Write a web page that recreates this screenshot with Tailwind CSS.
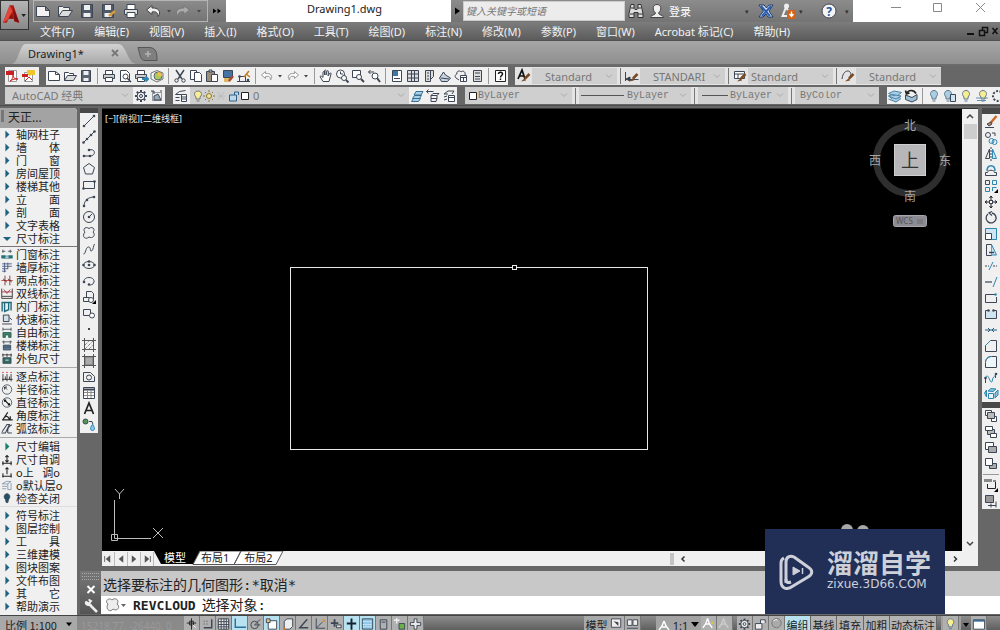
<!DOCTYPE html>
<html lang="zh-CN">
<head>
<meta charset="utf-8">
<title>Drawing1.dwg</title>
<script src="https://cdn.jsdelivr.net/npm/@tailwindcss/browser@4"></script>
</head>
<body class="flex h-screen flex-col overflow-hidden bg-[#676767] font-['Noto_Sans','Noto_Sans_CJK_SC',sans-serif] text-[11px] leading-none text-[#222]">

<!-- Title bar -->
<header class="relative flex h-[22px] shrink-0 items-stretch bg-linear-to-b from-[#8c8c8c] to-[#747474]">
  <button aria-label="应用程序菜单" class="absolute top-0 left-0 z-10 flex h-[30px] w-[29px] items-center border border-[#333] bg-linear-to-b from-[#b5b5b5] to-[#8a8a8a]">
    <svg class="h-[26px] w-[28px]" viewBox="0 0 28 26"><path d="M2 21 9 3h4l6 18-5-1-1-3H8l-2 4z" fill="#b3201b"/><path d="M9 3 2 21l5-3 5-9z" fill="#e2473a"/><path d="m12 4 7 17-5-2z" fill="#7c0f0e"/><path d="m8 17 3-6 2 6z" fill="#8a1512"/><path d="M21 12h5l-2.500 3z" fill="#222"/></svg>
  </button>
  <div class="ml-[33px] flex w-[175px] items-center border border-[#b4b4b4] pl-px" data-tools="bnew,bopen,bsave,bsaveas,bprint,bundo,bdd,bredo,bdd" data-kind="quick"></div>
  <button aria-label="更多" class="flex w-[18px] items-center justify-center"><svg class="size-3" viewBox="0 0 12 12"><path d="M2 3.500 5.500 6 2 8.500zM6.500 3.500 10 6 6.500 8.500z"/></svg></button>
  <h1 class="flex min-w-0 flex-1 items-center justify-center bg-white pb-[6px] pl-3 text-[11px] text-[#222]">Drawing1.dwg</h1>
  <button aria-label="展开搜索" class="flex w-3 items-center justify-center"><svg class="size-3" viewBox="0 0 12 12"><path d="M4 2.500 9 6 4 9.500z"/></svg></button>
  <input aria-label="搜索" placeholder="键入关键字或短语" class="my-px w-[162px] border border-[#ccc] bg-[#ececec] px-0.5 text-[10px] italic placeholder:text-[#777]">
  <div class="flex w-[228px] items-center pl-[2px] text-white">
    <button aria-label="搜索" class="mr-[3px] size-[18px]"><svg viewBox="0 0 18 18" fill="#ddd" stroke="#333"><path d="M4 2.500h3v4l1 1h2l1-1v-4h3l2 9v4h-5v-5H7v5H2v-4z"/><path d="M4 6h3m4 0h3M3 12h4m4 0h5"/></svg></button>
    <button class="flex items-center gap-[3px]"><svg class="size-[18px]" viewBox="0 0 18 18" fill="#eee" stroke="#444"><path d="M2.500 15.500c0-3 5-2 5-4.500C4 8 4.500 2.500 9 2.500S14 8 10.500 11c0 2.500 5 1.500 5 4.500z"/></svg>登录</button>
    <span class="flex-1"></span>
    <span class="text-[7px] text-[#333]">▾</span>
    <button aria-label="Exchange" class="ml-2 size-[18px]"><svg viewBox="0 0 18 18"><path d="M2 3h5l2.500 3L12 3h4l-4 6 4 6h-5l-2-3-3 3H2l4.500-6z" fill="#dce6f5" stroke="#1d3a6b"/><path d="m4 4 9 10M14 4 5 14" stroke="#2b5db0" stroke-width="2"/></svg></button>
    <button aria-label="连接" class="ml-1 size-[18px]"><svg viewBox="0 0 18 18"><path d="M7 5 3.500 14H12z" stroke="#eee" stroke-width="2" fill="none"/><circle cx="7.500" cy="4" r="2.500" fill="#eee"/><rect x="8" y="8" width="9" height="9" rx="1" fill="#d1651b"/><path d="M12.500 9.500v4.500m-2-2 2 2.500 2-2.500" stroke="#fff" stroke-width="1.400" fill="none"/></svg></button>
    <span class="ml-0.5 text-[7px] text-[#333]">▾</span>
    <button aria-label="帮助" class="ml-[18px] size-[16px]"><svg viewBox="0 0 16 16"><circle cx="8" cy="8" r="7" fill="#f4f4f4" stroke="#445"/><text x="8" y="12.500" text-anchor="middle" font-size="12" font-weight="700" fill="#2456a0">?</text></svg></button>
    <span class="mr-1 ml-2 text-[7px] text-[#333]">▾</span>
  </div>
  <div class="flex w-[147px] items-start justify-end gap-[26px] bg-white pr-3">
    <button aria-label="最小化" class="h-[15px] w-4"><svg viewBox="0 0 16 15" stroke="#888" fill="none"><path d="M3 7.500h10"/></svg></button>
    <button aria-label="最大化" class="h-[15px] w-4"><svg viewBox="0 0 16 15" stroke="#888" fill="none"><path d="M3.500 3.500h8v8h-8z"/></svg></button>
    <button aria-label="关闭" class="h-[15px] w-4"><svg viewBox="0 0 16 15" stroke="#888" fill="none"><path d="m4 3 9 9m0-9-9 9"/></svg></button>
  </div>
</header>

<!-- Menu bar -->
<nav class="flex h-[19px] shrink-0 items-center gap-5 border-b border-[#505050] bg-linear-to-b from-[#7d7d7d] to-[#5c5c5c] pl-10 whitespace-nowrap text-[#f2f2f2]">
  <button>文件(F)</button><button>编辑(E)</button><button>视图(V)</button><button>插入(I)</button><button>格式(O)</button><button>工具(T)</button><button>绘图(D)</button><button>标注(N)</button><button>修改(M)</button><button>参数(P)</button><button>窗口(W)</button><button>Acrobat 标记(C)</button><button>帮助(H)</button>
  <span class="flex-1"></span>
  <button aria-label="文档窗口" class="h-3 w-[34px]"><svg viewBox="0 0 34 12" stroke="#111" fill="none"><path d="M1 9h7" stroke-width="2"/><path d="M13.500 5.500h5v5h-5zM16.500 5V2.500h5v5H19M26.500 3l5 6m0-6-5 6" stroke-width="1.500"/></svg></button>
</nav>

<!-- File tabs -->
<div class="flex h-[25px] shrink-0 items-end border-b-2 border-[#6b6b6b] bg-linear-to-b from-[#a6a6a6] to-[#8f8f8f] pl-[11px]">
  <div class="relative h-[20px] w-[126px]">
    <svg class="absolute inset-0 h-full w-full" viewBox="0 0 126 20"><defs><linearGradient id="tg" x2="0" y2="1"><stop stop-color="#d2d2d2"/><stop offset="1" stop-color="#a9a9a9"/></linearGradient></defs><path d="M0 20c8 0 8-20 15-20h92c9 0 9 20 19 20z" fill="url(#tg)"/></svg>
    <div class="relative flex h-[18px] items-center justify-between pr-[18px] pl-[17px] text-[11px]"><button>Drawing1*</button><button aria-label="关闭标签" class="size-2"><svg viewBox="0 0 8 8" stroke="#777" stroke-width="1.800"><path d="m1 1 6 6m0-6L1 7"/></svg></button></div>
  </div>
  <button aria-label="新建标签" class="mb-[3px] h-[14px] w-[22px]"><svg viewBox="0 0 22 14" fill="#7f7f7f" stroke="#555"><path d="M1 .5h11c8 0 8 7 8 13H8C3 13.500 3 7 1 .5z"/><path d="M11 4v6M8 7h6" stroke="#b5b5b5" stroke-width="1.500"/></svg></button>
</div>

<!-- Standard toolbar and styles -->
<div class="flex h-[20px] shrink-0 items-stretch py-px">
  <div class="ml-[5px] flex w-[34px] items-center bg-[#f0f0f0]" data-tools="pdf,pdfc"></div>
  <div class="ml-[7px] flex shrink-0 items-center bg-[#f0f0f0]" data-tools="new,open,save,|,print,preview,plot,world,|,cut,copy,paste,match,block,|,undo,dd,redo,dd,|,pan,zoom,zoomw,zoomp,|,props,dcenter,palette,sheet,markup,calc,|,help"></div>
  <div class="ml-[7px] flex items-center bg-[#e4e4e4] pl-px">
    <span data-tools="tstyle" class="flex"></span>
    <span class="relative h-4 w-[85px]" data-select="Standard" data-pad="pl-[13px]"></span><i class="mx-[3px] h-4 w-px bg-[#777]"></i>
    <span data-tools="dstyle" class="flex"></span>
    <span class="relative h-4 w-[85px]" data-select="STANDARI" data-pad="pl-[13px]"></span><i class="mx-[3px] h-4 w-px bg-[#777]"></i>
    <span data-tools="tabstyle" class="flex"></span>
    <span class="relative h-4 w-[85px]" data-select="Standard" data-pad="pl-[3px]"></span><i class="mx-[3px] h-4 w-px bg-[#777]"></i>
    <span data-tools="mlstyle" class="flex"></span>
    <span class="relative h-4 w-[85px]" data-select="Standard" data-pad="pl-[13px]"></span>
  </div>
</div>

<!-- Workspace, layers and properties -->
<div class="flex h-[20px] shrink-0 items-stretch border-b border-[#4c4c4c] py-px">
  <div class="ml-[5px] flex w-[160px] items-center bg-[#f0f0f0]"><span class="relative h-full flex-1" data-select="AutoCAD 经典" data-pad="pl-[7px]"></span><span data-tools="gear,wsset" class="flex"></span></div>
  <div class="ml-[8px] flex w-[284px] items-center bg-[#f0f0f0]">
    <span data-tools="layers" class="flex"></span>
    <div class="ml-px flex h-full flex-1 items-center bg-[#cfcfcf]">
      <svg class="h-4 w-[62px]" viewBox="0 0 62 16" fill="none" stroke="#444"><path d="M6 9c-3-3-1-6 2-6s5 3 2 6v2H6zM6.500 13h3" fill="#f6ee9a" stroke="#777"/><circle cx="19" cy="8" r="2.500" fill="#f2e49a" stroke="#8a7a30"/><path d="M19 2v2m0 8v2m-6-6h2m8 0h2M15 4l1 1m6 6 1 1m0-8-1 1m-6 6-1 1" stroke="#8a7a30"/><path d="m28 4 6 8m0-8-6 8m-1-4h8" stroke="#bcbcbc"/><path d="M39.500 7h7v6h-7zM44.500 7V4h4v3" stroke="#2d5f86" fill="#bcd8ea"/><path d="M51.500 4.500h7v7h-7z" fill="#fff" stroke="#222"/></svg>
      <span class="relative h-full flex-1" data-select="0" data-pad="pl-[1px]"></span>
    </div>
    <span data-tools="lcur,lprev,lstate" class="flex"></span>
  </div>
  <div class="ml-[8px] flex w-[414px] items-center bg-[#e4e4e4] text-[10px] text-[#666]">
    <div class="flex h-full w-[107px] items-center bg-[#cfcfcf] pl-[3px]"><svg class="size-2.5" viewBox="0 0 10 10"><path d="M1.500 1.500h7v7h-7z" fill="#fff" stroke="#222"/></svg><span class="relative h-full flex-1" data-select="ByLayer" data-mono="1"></span></div>
    <i class="mx-[3px] h-4 w-px bg-[#777]"></i>
    <div class="flex h-full w-[112px] items-center bg-[#cfcfcf] pl-[2px]"><i class="mr-[3px] h-px w-[43px] bg-[#555]"></i><span class="relative h-full flex-1" data-select="ByLayer" data-mono="1"></span></div>
    <i class="mx-[3px] h-4 w-px bg-[#777]"></i>
    <div class="flex h-full w-[90px] items-center bg-[#cfcfcf] pl-[4px]"><i class="mr-[2px] h-px w-[26px] bg-[#555]"></i><span class="relative h-full flex-1" data-select="ByLayer" data-mono="1"></span></div>
    <i class="mx-[3px] h-4 w-px bg-[#777]"></i>
    <div class="flex h-full flex-1 items-center bg-[#cfcfcf] pl-[5px]"><span class="relative h-full flex-1" data-select="ByColor" data-mono="1"></span></div>
  </div>
  <div class="ml-[8px] flex flex-1 items-center overflow-hidden bg-[#f0f0f0]" data-tools="lay1,lay2,|,bulb,bulb2,bulby,bulbl,gearl"></div>
</div>

<!-- Workspace -->
<main class="flex min-h-0 flex-1 pt-[2px]">
  <aside class="w-[77px] shrink-0 overflow-hidden rounded-tr-sm bg-[#f0f0f0]">
    <h2 class="flex h-[20px] items-center gap-1 rounded-tr-sm bg-[#a3a3a3] pl-px text-[12px]"><i class="mb-1 h-3 w-[3px] bg-[#777]"></i>天正...</h2>
    <div id="palette"></div>
  </aside>
  <div class="ml-[3px] flex min-w-0 flex-1 flex-col">
    <div class="flex min-h-0 flex-1">
      <div class="w-[18px] shrink-0">
        <div class="h-[5px] bg-[#484848]"></div>
        <div class="flex flex-col items-center bg-[#f0f0f0]" data-tools="line,xline,pline,polygon,rect,arc,circle,cloud,spline,ellipse,earc,insert,mkblock,point,hatch,grad,region,table,mtext,addsel"></div>
      </div>
      <div class="ml-[4px] flex min-w-0 flex-1 flex-col border-t border-[#333]">
        <div class="flex min-h-0 flex-1">
          <section aria-label="绘图区" class="relative min-w-0 flex-1 overflow-hidden bg-black">
            <p class="pt-[5px] pl-[3px] text-[9px] text-[#e6e6e6]">[−][俯视][二维线框]</p>
            <svg class="absolute inset-0 h-full w-full" fill="none" stroke="#e8e8e8"><rect x="188.500" y="158.500" width="357" height="182"/><rect x="410.500" y="156.500" width="4" height="4" fill="#000"/></svg>
            <svg class="absolute bottom-1 left-2 h-[58px] w-[56px]" viewBox="0 0 56 58" fill="none" stroke="#bdbdbd"><path d="M4.500 11v38.500H41M1.500 45.500h6v6h-6zM5 0l4.500 5L14 0M9.500 5v5M43 39l10 10m0-10L43 49"/></svg>
            <svg class="absolute top-[8px] right-[9px] h-[112px] w-[88px]" viewBox="0 0 88 112"><circle cx="45" cy="43" r="33.500" fill="none" stroke="#2e2e2e" stroke-width="7"/><rect x="29.500" y="27.500" width="31" height="31" fill="#b7b7b9" stroke="#cfcfcf"/><text x="45" y="50" font-size="18" text-anchor="middle" fill="#333">上</text><g font-size="12" text-anchor="middle" fill="#a5a5a5"><text x="45" y="13">北</text><text x="45" y="84">南</text><text x="10" y="48">西</text><text x="80" y="48">东</text></g><rect x="28.500" y="98.500" width="33" height="11" rx="2" fill="#8b8b91" stroke="#a6a6ac"/><text x="31" y="107" font-size="8" fill="#55555c">WCS</text><path d="M52 102h6v5h-6z" fill="#7b7b82"/></svg>
            <svg class="absolute right-[92px] bottom-[16px] h-[12px] w-[30px]" viewBox="0 0 30 12" fill="#a8a8a8"><circle cx="7" cy="7" r="6"/><circle cx="23" cy="8" r="6"/></svg>
          </section>
          <div class="flex w-[16px] flex-col items-center bg-[#f0f0f0]">
            <button aria-label="向上滚动" class="h-[15px] w-3"><svg viewBox="0 0 12 15" fill="none" stroke="#444" stroke-width="1.500"><path d="m3 9 3-3 3 3"/></svg></button>
            <div class="h-[15px] w-[13px] bg-[#cdcdcd]"></div>
            <span class="flex-1"></span>
            <button aria-label="向下滚动" class="h-[15px] w-3"><svg viewBox="0 0 12 15" fill="none" stroke="#444" stroke-width="1.500"><path d="m3 6 3 3 3-3"/></svg></button>
          </div>
        </div>
        <div class="flex h-[15px] shrink-0 items-stretch bg-[#f0f0f0]">
          <div class="flex items-center" data-tools="first,prev,next,last" data-kind="nav"></div>
          <div class="relative h-full w-[130px]">
            <svg class="absolute inset-0 h-full w-full" viewBox="0 0 130 15"><path d="M0 0h46l-7 13H7z"/><path d="M46 0h41l-7 13.500H39zM87 0h42l-7 13.500H80z" fill="#fff" stroke="#555"/></svg>
            <div class="relative flex h-[13px] items-center gap-[15px] pl-[10px] text-[11px]"><button class="text-white">模型</button><button>布局1</button><button>布局2</button></div>
          </div>
          <div class="flex flex-1 items-center justify-end"><i class="mr-[3px] h-3 w-1 bg-[#c4c4c4]"></i>
            <div class="flex w-[284px] items-center justify-between"><button aria-label="向左滚动" class="size-3"><svg viewBox="0 0 12 12" fill="none" stroke="#333" stroke-width="1.500"><path d="M7.500 3.500 5 6l2.500 2.500"/></svg></button><button aria-label="向右滚动" class="size-3"><svg viewBox="0 0 12 12" fill="none" stroke="#333" stroke-width="1.500"><path d="M5 3.500 7.500 6 5 8.500"/></svg></button></div>
            <i class="w-[17px]"></i></div>
        </div>
      </div>
      <div class="ml-[4px] w-[18px] shrink-0">
        <div class="h-[6px] bg-[#484848]"></div>
        <div class="flex flex-col items-center bg-[#f0f0f0]" data-tools="erase,mcopy,mirror,offset,array,move,rotate,scale,stretch,trim,extend,breakp,break,join,chamfer,fillet,blend,explode"></div>
        <div class="h-[6px] bg-[#484848]"></div>
        <div class="flex flex-col items-center bg-[#f0f0f0]" data-tools="ord1,ord2,ord3,ord4,-,ord5,ord6"></div>
      </div>
    </div>

    <!-- Command line -->
    <section aria-label="命令行" class="mt-[5px] mb-px flex h-[43px] shrink-0 text-[14px] text-[#222]">
      <div class="flex w-[21px] flex-col items-center bg-linear-to-b from-[#777] to-[#555]">
        <svg class="h-[10px] w-[17px]" viewBox="0 0 17 10" stroke="#aaa" stroke-dasharray="1 1"><path d="M0 2.500h17M0 5.500h17M0 8.500h17"/></svg>
        <button aria-label="关闭命令行" class="size-4"><svg viewBox="0 0 16 16" stroke="#fff" stroke-width="2"><path d="m4.500 5 7 7m0-7-7 7"/></svg></button>
        <button aria-label="自定义" class="size-4"><svg viewBox="0 0 16 16" stroke="#eee" stroke-width="2.500" fill="none"><path d="m14 15-7-7"/><path d="M3 4.500 5.500 7 8 4 5.500 2.500M3 4.500C2 8 6 9 8 7" stroke-width="2"/></svg></button>
      </div>
      <div class="flex min-w-0 flex-1 flex-col font-['DejaVu_Sans_Mono','Noto_Sans_CJK_SC',monospace]">
        <p class="flex h-[25px] items-center bg-[#c8c8c8] pt-0.5 pl-[2px]">选择要标注的几何图形:*取消*</p>
        <label class="flex flex-1 items-center gap-[6px] bg-white pl-[3px]"><svg class="h-4 w-[23px]" viewBox="0 0 23 16" fill="#eee" stroke="#777"><path d="M4 7c-4-3 1-7 4-4 3-3 8 0 5 4 4 3 0 8-4 5-3 4-8 0-5-5z"/><path d="M17 7h5l-2.500 3z" fill="#666" stroke="none"/></svg><b class="text-[13px]">REVCLOUD</b><span class="shrink-0">选择对象:</span><input aria-label="命令输入" class="min-w-0 flex-1 outline-none"></label>
      </div>
    </section>
  </div>
</main>

<!-- Status bar -->
<footer class="h-[15px] shrink-0 overflow-hidden border-t border-[#444] bg-linear-to-b from-[#8d8d8d] to-[#5f5f5f]">
  <div class="flex h-[19px] items-stretch whitespace-nowrap">
    <button class="flex w-[77px] items-center gap-[9px] bg-[#a9a9a9] pl-[5px] font-['Noto_Sans_CJK_SC',sans-serif]">比例 1:100<svg class="-mt-1 size-1.5" viewBox="0 0 8 8"><path d="M0 2h8L4 7z"/></svg></button>
    <span class="flex w-[107px] items-center bg-[#8a8a8a] pl-1 text-[10px] text-[#999]">15218.77, -26440, 0</span>
    <div class="flex" data-kind="status" data-tools="sinfer,ssnap,sgrid,*sortho,spolar,*sosnap,s3d,sotrack,sducs,sdyn,*slwt,*stpy,sqp,ssc,sam"></div>
    <span class="flex-1"></span>
    <button class="w-[25px] bg-[#a9a9a9]">模型</button>
    <div class="flex" data-kind="status" data-tools="slay,sview"></div>
    <span class="w-[15px]"></span>
    <button class="flex w-[45px] items-center justify-between bg-[#a3a3a3] px-[2px]"><svg class="size-3" viewBox="0 0 12 12" fill="none" stroke="#fff" stroke-width="1.500"><path d="m6 1-2 5-3 4m5-9 2 5 3 4M4 7h4"/></svg>1:1<svg class="-mt-1 size-2" viewBox="0 0 8 8"><path d="M0 2h8L4 7z"/></svg></button>
    <div class="flex" data-kind="status" data-tools="sann,sann2"></div>
    <span class="w-[4px]"></span>
    <div class="flex" data-kind="status" data-tools="sgear,slock,ssphere"></div>
    <button class="w-[26px] border-r border-[#666] bg-[#b8e2f0]">编组</button>
    <button class="w-[26px] border-r border-[#666] bg-[#b3b3b3]">基线</button>
    <button class="w-[27px] border-r border-[#666] bg-[#b3b3b3]">填充</button>
    <button class="w-[26px] border-r border-[#666] bg-[#b3b3b3]">加粗</button>
    <button class="w-[47px] border-r border-[#666] bg-[#b3b3b3]">动态标注</button>
    <div class="ml-[4px] flex w-[20px] justify-center bg-[#a0a0a0]" data-kind="status" data-tools="bulby"></div>
    <svg class="mx-px h-4 w-2" viewBox="0 0 8 16"><path d="M1 7h6l-3 4z"/></svg>
    <div class="mr-[13px] flex" data-kind="status" data-tools="swin"></div>
  </div>
</footer>

<!-- Floating brand card -->
<aside class="absolute right-[55px] bottom-4 flex h-[85px] w-[180px] items-center gap-[13px] bg-[#212f57] pl-[14px] text-[#cdd0d8]">
  <svg class="h-[36px] w-[35px]" viewBox="0 0 35 36" fill="none" stroke="#cdd0d8" stroke-width="3" stroke-linejoin="round"><path d="M7 29V8c0-5 4-7 8-5l14 10c5 3 5 7 0 10L14 32C7 37 2 34 2 27V9c0-2 1-4 3-5"/><path d="M7 25c0 4 2 4 5 3"/><path d="M14 13v8l7-4z" fill="#cdd0d8" stroke-width="1"/><path d="M23.500 14v6" stroke-width="1.500"/></svg>
  <div class="pb-1"><p class="font-['Noto_Sans_CJK_SC',sans-serif] text-[26px] leading-[26px] font-bold">溜溜自学</p><p class="mt-[3px] font-['DejaVu_Sans',sans-serif] text-[12px]">zixue.3D66.COM</p></div>
</aside>

<script>
const K='#3d4654', B='#2c86b0', L='#cfe6f2';
const page='<path d="M2.500 3.500h7l4 3v6h-11zM9.500 3.500v3h4" fill="#fff"/>';
const folder='<path d="M2.500 12.500v-8h4l1 1h4v2" fill="#fff"/><path d="m2.500 12.500 3-5h9l-3 5z" fill="#ddd"/>';
const disk='<path d="M3.500 2.500h9v11h-9z" fill="#5a6472"/><path d="M5.500 3h5v4h-5zM5.500 10h5v3h-5z" fill="#eee" stroke="none"/>';
const printer='<path d="M4.500 6V2.500h7V6" fill="#fff"/><path d="M2.500 6.500h11v4h-11z" fill="#ccc"/><path d="M4.500 9.500h7v4h-7z" fill="#fff"/>';
const undo='<path d="M6.500 3.500 2.500 7l4 3.500V8.500c4-1 5 1 5 3.500 3-4 0-7-5-6.500z"/>';
const redo='<path d="m9.500 3.500 4 3.500-4 3.500V8.500c-4-1-5 1-5 3.500-3-4 0-7 5-6.500z"/>';
const bulb=(f,x=0)=>`<path d="M${6+x} 9c-3-3-1-6.500 2-6.500s5 3.500 2 6.500v2h-4zM${6.500+x} 13h3" fill="${f}" stroke="#60788a"/>`;
const brush='<path d="M13.500 6 9 10.500" stroke="#7a4a22" stroke-width="2.500"/><path d="m9 10-4 3.500 5-1z" fill="#7a4a22" stroke="none"/>';
const dot=(x,y,c=K)=>`<circle cx="${x}" cy="${y}" r="1.300" fill="${c}" stroke="none"/>`;
const gear=f=>`<path d="M8 2v12M2 8h12M3.800 3.800l8.400 8.400M12.200 3.800l-8.400 8.400" stroke-width="2"/><circle cx="8" cy="8" r="4" fill="${f}"/><circle cx="8" cy="8" r="1.500"/>`;
const I={
bnew:'<path d="M1.500 3.500h9l4 4v6h-13zM10.500 3.500v4h4" fill="#f2f2f2"/>',bopen:'<path d="M1.500 13.500v-10h4l1 1h6v3" fill="#eee"/><path d="m1.500 13.500 4-6h10l-4 6z" fill="#ddd"/>',
bsave:'<path d="M2.500 1.500h11v13h-11z" fill="#4f5a68"/><path d="M5 2h6v5H5zM4.500 10h7v4h-7z" fill="#eee" stroke="none"/>',
bsaveas:'<path d="M1.500 1.500h11v13h-11z" fill="#4f5a68"/><path d="M4 2h6v5H4zM3.500 10h7v4h-7z" fill="#eee" stroke="none"/><path d="m8 13 6-5" stroke="#d59a3a" stroke-width="2.500"/>',
bprint:'<path d="M4 6V1.500h8V6" fill="#fff"/><path d="M1.500 6.500h13v5h-13z" fill="#e0e0e0"/><path d="M4 9.500h8v5H4z" fill="#fff"/>',
bundo:'<path d="M7 2.500 1.500 7 7 11.500V9c4-1 6 1 6 4.500 4-5 0-9-6-8.500z" fill="#eee" stroke="#444"/>',
bredo:'<path d="M9 2.500 14.500 7 9 11.500V9c-4-1-6 1-6 4.500-4-5 0-9 6-8.500z" fill="#aaa" stroke="#777"/>',
pdf:'<path d="M3.500 2.500h8v11h-8z" fill="#fff" stroke="#999"/><path d="M1 3h8v4H1z" fill="#cc1f1f" stroke="none"/><path d="M5 13c3-2 3-5 3-6 0 3 2 4 5 4-3 0-5 0-8 2z" stroke="#cc1f1f"/>',
pdfc:'<path d="M3.500 4.500h8v9h-8z" fill="#fff" stroke="#999"/><path d="M6 2h8v5h-4L8 9V7H6z" fill="#f0c52e" stroke="none"/><path d="M1 6h6v3H1z" fill="#cc1f1f" stroke="none"/><path d="m4 13 4-4 3 3" stroke="#cc1f1f"/>',
new:page,open:folder,save:disk,print:printer,
preview:'<path d="M3.500 2.500h6l3 3v8h-9z" fill="#fff"/><circle cx="8.500" cy="8.500" r="2.500"/><path d="m10 10 4 4" stroke-width="1.500"/>',
plot:printer+`<path d="M9 11h6m-2.500-2.500L15 11l-2.500 2.500" stroke="${B}" stroke-width="2"/>`,
world:'<path d="m2 5 6-2.500L14 5v6l-6 3-6-3z" fill="#f4f4f0" stroke="#777"/><circle cx="9" cy="8" r="4" fill="#a9c95a" stroke="#5a6a7a"/><path d="M9 4v4h4a4 4 0 0 0-4-4z" fill="#f2c14a" stroke="none"/>',
cut:'<path d="m4 2 6 9M12 2l-6 9" stroke-width="1.500"/><circle cx="4.500" cy="12.500" r="1.700"/><circle cx="11.500" cy="12.500" r="1.700"/>',
copy:'<path d="M2.500 2.500h6v9h-6z" fill="#fff"/><path d="M6.500 4.500h5l2 2v7h-7z" fill="#fff"/>',
paste:'<path d="M2.500 3.500h8v10h-8z" fill="#9a8f7c"/><path d="M5 2h3v2H5z" fill="#ccc"/><path d="M7.500 6.500h6v7h-6z" fill="#fff"/>',
match:'<path d="M3.500 2.500h9v7h-9z" fill="#4573a5"/><path d="M4 10h6v4H4z" fill="#ddb66a" stroke="none"/><path d="m9 13 4-5" stroke="#a24a2b" stroke-width="2.500"/>',
block:'<path d="M3.500 8.500h6v5h-6zM1 13.500h13"/><path d="m8 9 5-6M10 6l4 3" stroke="#c07a20" stroke-width="1.500"/>'+dot(3.5,8.5)+dot(12,12),
undo:`<g stroke="#999" fill="#fff">${undo}</g>`,redo:`<g stroke="#999" fill="#fff">${redo}</g>`,
pan:'<path d="M5 13.500 2 8.500c1-1 2 0 3 1V4c1-1 1.500 0 1.500 0v3-4.500c1-1 1.500 0 1.500 0V7l1-4c1-.7 1.500 0 1.500.5L10 8l2-3c1 0 1.500.5 1 1l-2 7.500z" fill="#fff"/>',
zoom:'<circle cx="6.500" cy="6" r="4" fill="#fff"/><path d="M6.500 3.500V6H9"/><circle cx="10" cy="10" r="2.500" fill="#fff"/><path d="m12 12 2.500 2.500" stroke-width="2"/>',
zoomw:'<path d="M2.500 2.500h8v7h-8z" fill="#fff"/><circle cx="9" cy="9" r="2.500" fill="#fff"/><path d="m11 11 3 3" stroke-width="2"/>',
zoomp:'<circle cx="9" cy="8" r="3" fill="#fff"/><path d="m11 10 3 4" stroke-width="2"/><path d="M8 4H2.500m2-2-2 2 2 2"/>',
props:'<path d="M3.500 2.500h9v11h-9z" fill="#fff"/><path d="M4 3h5v5H4z" fill="#3a78a8" stroke="none"/><path d="M5 10.500h6"/>',
dcenter:'<path d="M2.500 2.500h11v11h-11zM6.500 3v10m3-10v10m-7-7h11m-11 4h11" fill="#ddd"/>',
palette:'<path d="M4.500 2.500h5v11h-5zM9.500 2.500h3v6l-3 3M6 5h2M6 8h2m-2 3h2" fill="#ddd"/>',
sheet:'<path d="m2.500 10 4-6 2 3 5 3-3 3.500h-6z" fill="#c9d4e0"/><path d="m4 10 8 1"/>',
markup:'<path d="M3 10c-2-2 0-4 1-4-1-3 3-4 4-2 2-2 5 0 4 3M3 10l3 2"/><path d="M7.500 7.500h6v6h-6zM8 9.500h5M10.500 10v3" fill="#fff"/>',
calc:'<path d="M4.500 2.500h8v11h-8zM6 5h5M6 8.500h5M6 11h5" fill="#ddd"/>',
help:'<path d="M3.500 2.500h10v11h-10z" fill="#fff" stroke="#222"/><path d="M6.500 6c0-2.500 4-2.500 4 0 0 1.500-2 1.500-2 3.500m0 1v1.500" stroke="#111" stroke-width="1.500"/>',
tstyle:'<path d="m2 11 4-9 3 9M3.500 8h4.500" stroke="#111" stroke-width="1.700"/>'+brush,
dstyle:'<path d="M1.500 4v9M1.500 11.500h13M2 11l4-2v4z" fill="#333"/>'+brush,tabstyle:'<path d="M2.500 3.500h10v7h-10zM2.500 6h10M6 6v4" fill="#fff"/>'+brush,
mlstyle:'<path d="M2 11c1-7 4-8 6-8s4 3 2 5" />'+brush,
gear:gear('#f0f0f0'),sgear:gear('#eee'),
wsset:'<path d="M3.500 4.500h9v8h-9z" stroke-dasharray="1 1"/><path d="M2 3h3v3m8-3h-2m-6 9V8l4-2 3 6z" fill="#9ab"/>',
layers:'<path d="M2.500 6.500h6M2.500 9.500h4m0-6 6-1m-6 1-4 3M2.500 12.500h4"/><path d="M8.500 6.500h5v7h-5zM8.500 9h5m-5 2h5" fill="#fff"/>',
lcur:`<g stroke="#3b6f93" fill="#a9d2ea"><path d="m2.500 13.500 2-3h7l-2 3zM3.500 10.500l2-3h7l-2 3zM5 7l2-3.500h7L12 7z"/></g>`,
lprev:'<path d="M1.500 3.500h7m-5-2-2 2 2 2M6 7.500l2-2h6l-2 2zM6 7.500v3h6v-3M6 10.500v3h5l1-3" />',lstate:'<path d="m3 6 4-3h6l-2 3M3 9l3-1M3 12l3-1M3 6h4"/><path d="M7.500 7.500h6v6h-6zM7.500 9.500h6" fill="#fff"/>',
lay1:`<g stroke="#4d83a6" fill="#a9cfe6"><path d="m1.500 8 4-1.500L14 8l-5 6zM1.500 5.500 7 3l7.500 1.500-5 4z"/><path d="m1.500 8 7.500 3 5-3M1.500 11l7.500 3 5-3.500"/></g>`,
lay2:'<path d="M2.500 7 9 9.500l5-3v5L9 14l-6.500-2.500z" fill="#9cc0d8"/><path d="M13 5.500c-2-4-8-4-9 0m-1.500-3 1 3.500 3-1" stroke="#222" stroke-width="1.700"/>',
bulb:bulb('#a9cde4'),bulb2:bulb('#a9cde4',-2)+'<path d="M8.500 6.500h5v7h-5z" fill="#cfe6f2"/>',bulby:bulb('#f7ef92'),bulbl:bulb('#f7ef92',1)+'<path d="M2 10h12M3 12.500h9" stroke="#6a8fab"/>',
gearl:'<circle cx="8" cy="8" r="5" stroke-width="2" stroke-dasharray="2 1.500"/>',
line:'<path d="M3 13 13 3"/>'+dot(3,13)+dot(13,3),xline:'<path d="M3 13 13 3"/>'+dot(2.5,13.5)+dot(13.5,2.5)+dot(6,10)+dot(10,6),
pline:'<path d="M8 5c7-2 7 6 1 6H3"/>'+dot(3,11)+dot(8,5)+dot(9,11),
polygon:'<path d="m8 2.500 5.500 4-2 6.500h-7l-2-6.500z"/>',rect:'<path d="M2.500 4.500h11v7h-11z"/>'+dot(2.5,11.5)+dot(13.5,4.5),
arc:'<path d="M3 13c0-6 5-9 10-9"/>'+dot(3,13)+dot(6,7)+dot(13,4),circle:'<circle cx="8" cy="8" r="5.500"/><path d="m8 8 3-3"/>'+dot(8,8),
cloud:'<path d="M4 7C1 4 5 1 8 3.500 11 1 15 4 12 7c3 3 0 7-4 5-3 3-8 0-4-5z"/>',spline:'<path d="M2.500 13c2 1 2-7 5-7s1 5 3 4 2-6 3-7"/>',
ellipse:'<ellipse cx="8" cy="8" rx="5.500" ry="3.500"/>'+dot(8,8)+dot(2.5,8)+dot(8,4.5)+dot(13.5,8),earc:'<path d="M3 9c-1-6 11-6 10 0-.5 3-4 3-4 3"/>'+dot(8,11.5)+dot(3,9),
insert:'<path d="M5.500 8V2.500h5l2 2V10M2.500 8.500h6v4h-6z"/><circle cx="10" cy="11" r="2.500" fill="#fff"/><path d="M15 15h-4l4-4z" fill="#000" stroke="none"/>',
mkblock:'<path d="M2.500 10.500v-6h7V8M2.500 10.500h6"/><circle cx="11" cy="10.500" r="2.500" fill="#fff"/>',point:'<path d="M7 7h2v2H7z" fill="#3d4654" stroke="none"/>',
hatch:'<g stroke="#555"><path d="M3.500 1v14M1 3.500h14M12.500 1v14M1 12.500h14"/><path d="m4 8 4-4m-4 8 8-8m-4 8 4-4" stroke-dasharray="1 1"/></g>',
grad:'<path d="M4 4h8v8H4z" fill="#aaa" stroke="#777"/><path d="M3.500 1v14M1 3.500h14M12.500 1v14M1 12.500h14" stroke="#555"/>',
region:'<path d="M2.500 12.500v-9h7l4 4v5z"/><circle cx="8" cy="8.500" r="2.500"/>',table:'<path d="M2.500 2.500h11v11h-11z" fill="#fff"/><path d="M3 4.500h10" stroke-width="2"/><path d="M3 7.500h10M3 10.500h10M6.500 5v8M10 5v8" stroke="#888"/>',
mtext:'<path d="m3.500 13 4.500-11 4.500 11M5 9.500h6" stroke="#222" stroke-width="1.700"/>',addsel:'<circle cx="4.500" cy="4.500" r="2.500" fill="#4f9a4f"/><path d="M8 4.500h3l1 3"/><path d="M11.500 7.500c-4 5-1 6 0 6s4-1 0-6z" fill="#8cc4ea" stroke="#2c86b0"/>',
erase:'<path d="m13.500 2-6 7" stroke="#c96a2a" stroke-width="2.500"/><path d="M8 8 4 10l2 2 3-2z" fill="#b9855c"/><path d="M2 13.500h9"/>',
mcopy:`<circle cx="5" cy="5" r="2.500"/><path d="M9 3h3v3"/><g stroke="${B}"><circle cx="8.500" cy="11" r="2.500"/><circle cx="11.500" cy="12" r="2.500"/></g>`,
mirror:`<path d="M6.500 3v9.500h-4z"/><path d="M9.500 3v9.500h4z" stroke="${B}" fill="${L}"/><path d="M8 1v14" stroke-dasharray="2 1"/>`,
offset:`<path d="M2.500 13.500h11v-3h-2c0-3-7-3-7 0h-2z"/><path d="M4 9c0-7 8-7 8 0" stroke="${B}" stroke-width="1.500"/>`,
array:`<path d="M2.500 2.500h4v4h-4z"/><path d="M9.500 2.500h4v4h-4zM2.500 9.500h4v4h-4zM9.500 13V9.500h4" stroke="${B}"/><path d="M15 15h-4l4-4z" fill="#000" stroke="none"/>`,
move:'<path d="M8 2v12M2 8h12M6.500 4 8 2l1.500 2M6.500 12 8 14l1.500-2M4 6.500 2 8l2 1.500M12 6.500 14 8l-2 1.500" stroke="#222"/><rect x="6.500" y="6.500" width="3" height="3" fill="#fff"/>',
rotate:'<path d="M5 4a5 5 0 1 0 4-1M9 1.500 6 3l3 2.500" stroke-width="1.300"/>',scale:`<path d="M2.500 2.500h11v11h-11z" fill="${L}" stroke="${B}"/><path d="M2.500 7.500h6v6h-6z" fill="#fff"/>`,
stretch:`<path d="M3.500 2.500h5v11h-5z"/><path d="M8.500 2.500 13.500 13h-5" stroke="${B}" fill="${L}"/><path d="M6 10.500h5" stroke-width="1.500"/>`,
trim:`<path d="M2 8h4M10 8h4" stroke-dasharray="2 1"/><path d="m6 12 4-8" stroke="${B}"/>`,extend:`<path d="M2 8h7" stroke-width="1.200"/><path d="m10 13 4-10" stroke="${B}"/>`,
breakp:`<path d="M12 4.500H2.500v8h11V7"/>`+dot(12.5,4.5,B),break:`<path d="M5 4.500H2.500v8h11v-8H11" fill="${L}"/>`+dot(5.5,4.5)+dot(10.5,4.500),
join:`<path d="M2 8h12M5 6l2 2-2 2m6-4L9 8l2 2" stroke="#245a80"/>`,chamfer:`<path d="M2.500 13.500v-6l5-5h6v11z"/><path d="m2.500 7.500 5-5" stroke="${B}"/>`,
fillet:`<path d="M2.500 8.500c0-3 2-6 6-6h5v11h-11z" fill="#eef6fa"/><path d="M2.500 8.500c0-3 2-6 6-6" stroke="${B}"/>`,blend:`<path d="M2.500 13V8m10-5v5"/><path d="M2.500 8c3-8 5 10 7 2 0-3 2-3 3-5" stroke="${B}"/>`+dot(2.5,8)+dot(13,4),
explode:`<g fill="#8cc6e0" stroke="${B}"><path d="M5.500 7.500h5v5h-5z" fill="#e8f4fa"/><path d="m1.500 7 2-3v7zM5 5l3-2.500 5 .5-3 2.500zM12 7l3-3v5l-3 3z"/></g>`,
ord1:'<path d="M2.500 2.500h6v5h-6z" fill="#fff"/><path d="M8.500 8.500h5v5h-5z" fill="#fff"/><path d="M4.500 4.500h7v6h-7z" fill="#bbb"/>',
ord2:'<path d="M4.500 5.500h7v5h-7z" fill="#bbb"/><path d="M2.500 2.500h7v4h-7zM7.500 9.500h6v4h-6z" fill="#fff"/>',
ord3:'<path d="M2.500 2.500h8v7h-8z" fill="#fff"/><path d="M5.500 6.500h8v6h-8z" fill="#aaa"/>',ord4:'<path d="M6.500 7.500h7v5h-7z" fill="#aaa"/><path d="M2.500 2.500h7v7h-7z" fill="#fff"/>',
ord5:'<path d="M2 2v3m2-3v3m2-3v3m2-3v3M4.500 7v4.500h8V5M10 4h3" stroke="#222"/><path d="M15 15h-4l4-4z" fill="#000" stroke="none"/>',
ord6:'<path d="M2.500 2.500h8v7h-8z" fill="#999"/><path d="M5 12.500h8m-5-2v4m5-6v6"/>',
first:'<path d="M3.500 4v8" stroke="#444"/><path d="M11 3v10L5 8z" fill="#555" stroke="none"/>',prev:'<path d="M11 3v10L5 8z" fill="#555" stroke="none"/>',
next:'<path d="M5 3v10l6-5z" fill="#555" stroke="none"/>',last:'<path d="M12.500 4v8" stroke="#444"/><path d="M5 3v10l6-5z" fill="#555" stroke="none"/>',
sinfer:'<path d="M8 2v12M3 7h10M6 5h4v4H6z" stroke="#222"/><path d="m9 9 4 3" stroke="#eee"/>',ssnap:'<path d="M12.500 3v9H4" stroke-width="1.500"/><path d="M4 8h5M4 5h5" stroke-dasharray="1 2"/>',
sgrid:'<path d="M2.500 2.500h11v11h-11zM5.500 2v12M8.500 2v12M11 2v12M2 5.500h12M2 8.500h12M2 11h12" fill="#eee"/>',sortho:`<path d="M3.500 2v9.500H15" stroke="#2c6f9a" stroke-width="1.500"/>`,
spolar:'<circle cx="7" cy="9" r="4"/><path d="m7 9 6-6M7 9h6"/>',sosnap:'<path d="M4.500 4.500h9v9h-9z" fill="#fff"/><path d="M2.500 2.500h4v4h-4z" fill="#e8c48a"/>',
s3d:'<path d="m4.500 5 3-2.500h6v8l-3 3h-6z" fill="#eee"/>'+dot(4.5,13,'#d07a2a'),sotrack:'<path d="m12 3-8 9h9" stroke-width="1.500"/>',
sducs:'<path d="M4.500 2v10.500H14M4.500 12.500 11 6"/><path d="m11 3 3 3m0-3-3 3" stroke="#d0892a"/>',sdyn:'<path d="M7 3v8M3 7h8" stroke-width="2"/><path d="M9 9h5v3H9z" fill="#ddd"/>',
slwt:'<path d="M8 2v12M3 7.500h10" stroke="#123" stroke-width="2"/>',stpy:'<path d="M2.500 2.500h11v11h-11z" fill="#8cc8ea"/><path d="M3 5.500h10M3 8.500h10M3 11h10" stroke="#fff" stroke-dasharray="1 1"/>',
sqp:'<path d="M4.500 3.500h7v10h-7zM6 6h4"/>',ssc:'<path d="M2 4h6M5 1.500v6" stroke="#eee" stroke-width="1.500"/><path d="M7.500 7.500h6v6h-6z" fill="#6ab04c"/>',sam:'<path d="M6.500 2.500h3v4h4v3h-4v4h-3v-4h-4v-3h4z" fill="#eee"/>',
slay:'<path d="M2.500 2.500h10v9h-10z" fill="#eee"/><path d="m5 5 5 5V6z" fill="#444" stroke="none"/>',sview:'<path d="M2.500 3.500h5v6h-5zM8.500 3.500h5v6h-5zM2 12.500h12" fill="#eee"/>',
sann:'<path d="m7 2-2 6-3 4m5-10 2 6 3 4M5 8h4" stroke="#fff" stroke-width="1.500"/>'+dot(12,7,'#e8c43a'),sann2:'<path d="m7 2-2 6-3 4m5-10 2 6 3 4M5 8h4" stroke="#ccc" stroke-width="1.500"/>',
slock:'<path d="M2.500 7.500h7v6h-7zM8 7V3.500h5V7" fill="#eee"/>',ssphere:'<circle cx="8" cy="7" r="5" fill="#aaa" stroke="#777"/><path d="M5 5c1-2 3-2 4-1" stroke="#fff"/>',
swin:'<path d="M2.500 3.500h12v10h-12z" fill="#fff"/><path d="M3 4.500h11" stroke="#3a6a9a" stroke-width="2"/>',
tri:'<path d="M6 3v10l5-5z" fill="#1f6384" stroke="none"/>',trg:'<path d="M6 3v10l5-5z" fill="#12806a" stroke="none"/>',trd:'<path d="M3 6h10l-5 5z" fill="#1f6384" stroke="none"/>',
d1:'<path d="M2 4h4M9 4h5M3 2v4m9-4v4"/><path d="M1 9h5v4H1zM10 9h5v4h-5z" fill="#24707a" stroke="none"/><path d="M5 10h6m-6 2.500h6" stroke="#24707a"/>',
d2:'<path d="M2 3.500h12M2 6.500h12M2 9.500h7m-7 3h5M5 2v12M9 2v8" stroke="#3c4c7a"/>',
d3:'<path d="M1 8h14" stroke="#c03030"/><path d="M5.500 2v12M11.500 2v12M3 6l5 4m1-4 5 4" stroke="#622"/>',
d4:'<path d="M1.500 2v12h13V2M2 11.500h12" stroke="#222"/><path d="M1 6h14M4 3l4 5m4-5-4 5" stroke="#a02a3a"/>',d5:'<path d="M2 2v12M5 4v10l5-2V3M13 2v11M2 3h12" stroke="#1f6a7a" stroke-width="1.700"/>',
d6:'<path d="M3.500 2.500h7v8h-7zM2 13.500h12m0-5-3-3" fill="#cfe0ea" stroke="#223"/>',d7:'<path d="M3 6V2m10 4V2M3 4h10"/><path d="M3 14V8h10v6h-3v-3H6v3z" fill="#3f7f6c" stroke="#2a5f50"/>',
d8:'<path d="M2 3.500h12M4 2v4m8-4v4"/><path d="M3.500 7.500h9v6h-9zM3 10h10" fill="#5a7a9a"/>',d9:'<path d="M2 3.500h12M3 2v4m10-4v4M8 2v4" stroke="#222"/><path d="M3 7h10v7H3z" fill="#2f6b60"/><path d="M6 10h4" stroke="#fff"/>',
e1:'<path d="M2 11.500h13M3 5v9m5-9v9m5-9v9M6 8v4m5-4v4" stroke="#222"/><path d="M2 3h2m3 0h2m3 0h2" stroke="#c03030"/>',e2:'<circle cx="8" cy="8" r="5.800"/><path d="M8 8 5 5m0 3V5h3" stroke="#111"/>',e3:'<circle cx="8" cy="8" r="5.800"/><path d="m5 5 6 6M5 7V5h2m4 4v2H9" stroke="#111" stroke-width="1.500"/>',
e4:'<path d="M2 13.500h13M3 13l6-9m-4 6c3-2 5 0 6 3M12 9v4" stroke="#222" stroke-width="1.500"/>',e5:'<path d="M1 13.500h5L11 3H8L2 12M9 13.500c-1-5 1-8 5-10m-5 10h5" stroke-width="1.300"/>',
f1:'<path d="M2 12.500h12M3 10v5m10-5v5M8 3v8M6 5l2-2 2 2M6 9l2 2 2-2" stroke="#222" stroke-width="1.300"/>',f2:'<path d="M2 12.500h12M3 9v5m10-5v5M8 2v8M6 4l2-2 2 2" stroke="#222" stroke-width="1.300"/>',
f3:'<path d="m2 6 5-3h6l-4 3zM2 9h6m-6 3h5M9 6v7h4V5" stroke="#7c93a8"/>',f4:'<path d="M6 9c-3-3-1-7 2-7s5 4 2 7l-1 4H7z" fill="#1f5068"/>'
};
const svg=n=>`<svg class="size-full" viewBox="0 0 16 16" fill="none" stroke="${K}">${I[n]||''}</svg>`;
document.querySelectorAll('[data-tools]').forEach(el=>{
  const kind=el.dataset.kind||'';
  el.innerHTML=el.dataset.tools.split(',').map(n=>{
    if(n==='|')return '<i class="mx-[3px] h-4 w-px shrink-0 bg-[#999]"></i>';
    if(n==='-')return '<i class="my-[2px] h-px w-4 bg-[#999]"></i>';
    if(n==='dd'||n==='bdd')return `<button aria-label="下拉" class="${n==='dd'?'w-[10px]':'-ml-1 w-[12px]'} h-4 shrink-0"><svg class="size-full" viewBox="0 0 10 16"><path d="M3 7h4l-2 2.500z" fill="#444"/></svg></button>`;
    const on=n[0]==='*'; if(on)n=n.slice(1);
    const c=kind==='quick'?'mr-[6px] size-4':kind==='nav'?'h-[14px] w-[13px] border-r border-[#bbb]':kind==='status'?(on?'w-4 border-r border-[#777] bg-[#b8e2f0] h-4':'w-4 h-4 border-r border-[#777] bg-[#b0b0b0]'):'size-4';
    return `<button aria-label="${n}" class="${c} shrink-0">${svg(n)}</button>`;
  }).join('');
});
document.querySelectorAll('[data-select]').forEach(el=>{
  const t=el.dataset.select, f=el.dataset.mono?"font-['Liberation_Mono',monospace] text-[10px]":'text-[11px]';
  el.innerHTML=`<select aria-label="${t}" class="h-full w-full appearance-none bg-[#cfcfcf] ${f} ${el.dataset.pad||''} text-[#777] outline-none"><option>${t}</option></select><svg class="pointer-events-none absolute top-1 right-1 size-2" viewBox="0 0 8 8" fill="none" stroke="#aaa"><path d="m1 2.500 3 3 3-3"/></svg>`;
});
const groups=[
 [['tri','轴网柱子'],['tri','墙 体'],['tri','门 窗'],['tri','房间屋顶'],['tri','楼梯其他'],['tri','立 面'],['tri','剖 面'],['tri','文字表格'],['trd','尺寸标注']],
 [['d1','门窗标注'],['d2','墙厚标注'],['d3','两点标注'],['d4','双线标注'],['d5','内门标注'],['d6','快速标注'],['d7','自由标注'],['d8','楼梯标注'],['d9','外包尺寸']],
 [['e1','逐点标注'],['e2','半径标注'],['e3','直径标注'],['e4','角度标注'],['e5','弧弦标注']],
 [['trg','尺寸编辑'],['f1','尺寸自调'],['f2','o上 调o'],['f3','o默认层o'],['f4','检查关闭']],
 [['tri','符号标注'],['tri','图层控制'],['tri','工 具'],['tri','三维建模'],['tri','图块图案'],['tri','文件布图'],['tri','其 它'],['tri','帮助演示']]];
const rules=['my-px border-[#777]','my-[2px] border-[#aaa]','mt-[2px] mb-[2px] border-[#aaa]','mt-px mb-[2px] border-[#ddd]'];
document.getElementById('palette').innerHTML=groups.map((g,i)=>g.map(([n,t])=>
 `<button class="flex h-[13px] w-full items-center gap-[2px] font-['Noto_Sans_CJK_SC',sans-serif] text-[11px] leading-[13px] whitespace-nowrap"><span class="h-[13px] w-[14px]">${svg(n)}</span><span class="flex min-w-[44px] justify-between">${t.split(' ').map(s=>`<span>${s}</span>`).join('')}</span></button>`).join('')
 +(rules[i]?`<hr class="${rules[i]}">`:'')).join('');
</script>
</body>
</html>
